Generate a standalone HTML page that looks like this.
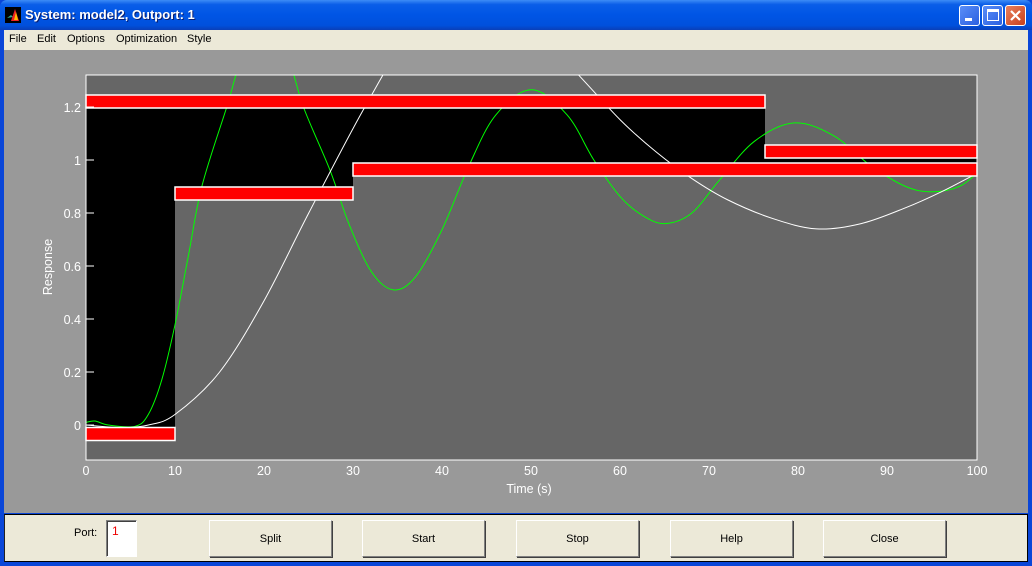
<!DOCTYPE html>
<html><head><meta charset="utf-8"><style>
*{margin:0;padding:0;box-sizing:border-box}
body{width:1032px;height:566px;overflow:hidden;background:#0A46D8;font-family:"Liberation Sans",sans-serif;position:relative}
.title{position:absolute;left:0;top:0;width:1032px;height:30px;background:linear-gradient(#3D8CF6 0%,#0A5EE8 15%,#0055E5 50%,#0050DC 85%,#0A3FB8 100%);border-radius:7px 7px 0 0}
.title span{position:absolute;left:25px;top:7px;color:#fff;font-weight:bold;font-size:13px;text-shadow:1px 1px #0A1E6E}
.tb{position:absolute;top:5px;width:21px;height:21px;border:1px solid #fff;border-radius:3px;background:linear-gradient(135deg,#5A8EF8,#2A5FE0)}
.menu{position:absolute;left:4px;top:30px;width:1024px;height:20px;background:#ECE9D8;font-size:11px}
.menu span{position:absolute;top:3px}
.grey{position:absolute;left:4px;top:50px;width:1024px;height:463px;background:#999}
.panel{position:absolute;left:4px;top:514px;width:1024px;height:48px;background:#ECE9D8;border:1px solid #000;border-left:1px solid #222}
.btn{position:absolute;top:520px;width:123px;height:37px;background:#ECE9D8;border:1px solid;border-color:#fff #808080 #808080 #fff;box-shadow:1px 1px 0 #404040;font-size:11px;text-align:center;line-height:37px}
</style></head><body>
<div class="title">
<svg style="position:absolute;left:5px;top:7px" width="16" height="16"><rect width="16" height="16" fill="#000"/><path d="M2 11 L6 8 L8 10 Z" fill="#3a8"/><path d="M6 14 L10 2 L14 14 Z" fill="#e22"/><path d="M9 13 L11 5 L13 13Z" fill="#fb0"/></svg>
<span>System: model2, Outport: 1</span>
<div class="tb" style="left:959px"><div style="position:absolute;left:5px;top:12px;width:7px;height:3px;background:#fff"></div></div>
<div class="tb" style="left:982px"><div style="position:absolute;left:4px;top:3px;width:12px;height:12px;border:1px solid #fff;border-top:3px solid #fff"></div></div>
<div class="tb" style="left:1005px;background:linear-gradient(135deg,#E8805E,#C8401C)"><svg width="21" height="21" style="position:absolute;left:-1px;top:-1px"><path d="M6 6 L15 15 M15 6 L6 15" stroke="#fff" stroke-width="2.2"/></svg></div>
</div>
<div class="menu"><span style="left:5px">File</span><span style="left:33px">Edit</span><span style="left:63px">Options</span><span style="left:112px">Optimization</span><span style="left:183px">Style</span></div>
<div class="grey"></div>
<svg style="position:absolute;left:0;top:0" width="1032" height="566" font-family="Liberation Sans" font-size="12.5" fill="#fff">
<defs><clipPath id="c"><rect x="86" y="75" width="891" height="385"/></clipPath></defs>
<rect x="86" y="75" width="891" height="385" fill="#666"/>
<rect x="86" y="108" width="89" height="320" fill="#000"/>
<rect x="175" y="108" width="178" height="79" fill="#000"/>
<rect x="353" y="108" width="412" height="55" fill="#000"/>
<rect x="765" y="158" width="212" height="5" fill="#000"/>
<g clip-path="url(#c)" fill="none" stroke-width="1">
<path id="g" stroke="#0f0"/><path id="w" stroke="#fff"/>
</g>
<g fill="#f00" stroke="#fff" stroke-width="1.5">
<rect x="86" y="95" width="679" height="13"/>
<rect x="765" y="145" width="212" height="13"/>
<rect x="86" y="427.5" width="89" height="13"/>
<rect x="175" y="187" width="178" height="13"/>
<rect x="353" y="163" width="624" height="13"/>
</g>
<rect x="86" y="75" width="891" height="385" fill="none" stroke="#fff"/>
<g stroke="#fff"><path d="M86 107h8M86 160h8M86 213h8M86 266h8M86 319h8M86 372h8M86 425h8"/></g>
<g text-anchor="end"><text x="81" y="112">1.2</text><text x="81" y="165">1</text><text x="81" y="218">0.8</text><text x="81" y="271">0.6</text><text x="81" y="324">0.4</text><text x="81" y="377">0.2</text><text x="81" y="430">0</text></g>
<g text-anchor="middle"><text x="86" y="475">0</text><text x="175" y="475">10</text><text x="264" y="475">20</text><text x="353" y="475">30</text><text x="442" y="475">40</text><text x="531" y="475">50</text><text x="620" y="475">60</text><text x="709" y="475">70</text><text x="798" y="475">80</text><text x="887" y="475">90</text><text x="977" y="475">100</text>
<text x="529" y="493">Time (s)</text>
<text transform="translate(52,267) rotate(-90)">Response</text></g>
</svg>
<div class="panel"></div>
<div style="position:absolute;left:74px;top:527px;font-size:11px">Port:</div>
<div style="position:absolute;left:106px;top:520px;width:31px;height:37px;background:#fff;border:1px solid;border-color:#808080 #fff #fff #808080;box-shadow:inset 1px 1px 0 #404040;color:#e00;font-size:12px;padding:3px 0 0 5px">1</div>
<div class="btn" style="left:209px">Split</div>
<div class="btn" style="left:362px">Start</div>
<div class="btn" style="left:516px">Stop</div>
<div class="btn" style="left:670px">Help</div>
<div class="btn" style="left:823px">Close</div>
<script>
function mk(pts){var P=pts.map(function(p){return[86+8.91*p[0],425-265*p[1]]});var d="M"+P[0][0]+" "+P[0][1];
for(var i=0;i<P.length-1;i++){var p0=P[i-1]||P[i],p1=P[i],p2=P[i+1],p3=P[i+2]||p2;
d+=" C"+(p1[0]+(p2[0]-p0[0])/6)+" "+(p1[1]+(p2[1]-p0[1])/6)+" "+(p2[0]-(p3[0]-p1[0])/6)+" "+(p2[1]-(p3[1]-p1[1])/6)+" "+p2[0]+" "+p2[1];}return d;}
document.getElementById("g").setAttribute("d",mk([[0,0.01],[1,0.015],[2.5,0.0],[5.5,-0.005],[7,0.04],[8.5,0.17],[10,0.38],[11.5,0.64],[13,0.9],[15.8,1.2],[17.5,1.38],[20,1.47],[22.5,1.4],[24.4,1.2],[27.4,0.96],[29.5,0.76],[32,0.58],[34.5,0.51],[37,0.56],[40,0.74],[43,0.98],[46,1.17],[50,1.265],[54,1.17],[57,1.0],[60,0.86],[62.5,0.79],[65,0.76],[68,0.8],[71,0.92],[75,1.07],[79.5,1.14],[84,1.09],[88,0.98],[92,0.9],[95,0.88],[98,0.9],[100,0.95]]));
document.getElementById("w").setAttribute("d",mk([[0,0.0],[4,-0.01],[7,0.0],[10,0.04],[15,0.2],[20,0.47],[25,0.8],[31.3,1.2],[36,1.45],[42,1.6],[48,1.58],[55.3,1.32],[60,1.15],[64,1.03],[68,0.93],[72,0.85],[77,0.78],[82,0.74],[87,0.76],[92,0.82],[96,0.88],[100,0.95]]));
</script>
</body></html>
